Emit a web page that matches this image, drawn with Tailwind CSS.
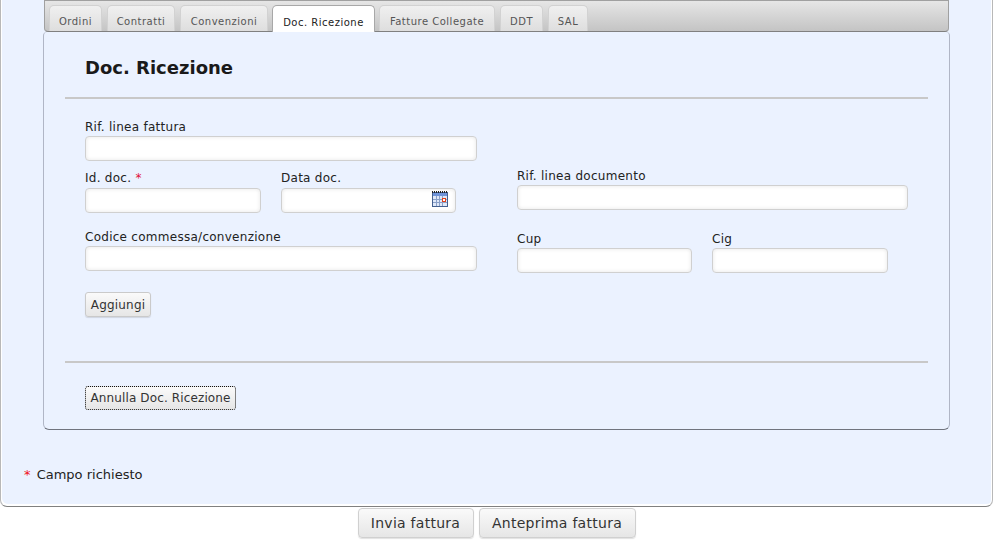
<!DOCTYPE html>
<html lang="it">
<head>
  <meta charset="UTF-8" />
  <title>Doc. Ricezione</title>
  <script src="https://cdn.jsdelivr.net/npm/@tailwindcss/browser@4"></script>
</head>
<body class="bg-white h-[542px] overflow-hidden font-['DejaVu_Sans',Verdana,sans-serif] text-[12px] tracking-[0.27px] text-[#222]">

  <!-- outer panel -->
  <div class="h-[507px] bg-[#ebf2ff] border-x border-x-[#b8b8b8] border-b border-b-[#808080] rounded-b-[7px] shadow-[inset_1px_-2px_0_#fff,inset_-1px_0_0_#fff] pl-[42px] pr-[42px]">

    <!-- tab bar -->
    <div class="h-[32px] mx-px px-[4px] pt-[4px] flex gap-[5px] bg-gradient-to-b from-[#e6e6e6] to-[#c4c4c4] border border-[#a0a0a0] border-b-[#808080] rounded-b-[4px] text-[10px] tracking-[0.5px] text-[#555]">
      <div class="h-[26px] w-[53px] pt-[6px] flex items-center justify-center rounded-t-[5px] border border-b-0 border-[#d2d2d2] bg-gradient-to-b from-[#f0f0f0] to-[#dedede]">Ordini</div>
      <div class="h-[26px] w-[68px] pt-[6px] flex items-center justify-center rounded-t-[5px] border border-b-0 border-[#d2d2d2] bg-gradient-to-b from-[#f0f0f0] to-[#dedede]">Contratti</div>
      <div class="h-[26px] w-[88px] pt-[6px] flex items-center justify-center rounded-t-[5px] border border-b-0 border-[#d2d2d2] bg-gradient-to-b from-[#f0f0f0] to-[#dedede]">Convenzioni</div>
      <div class="h-[27px] w-[103px] pt-[6px] flex items-center justify-center rounded-t-[5px] border border-b-0 border-[#a8a8a8] bg-white text-[#222] -mx-px z-10">Doc. Ricezione</div>
      <div class="h-[26px] w-[116px] pt-[6px] flex items-center justify-center rounded-t-[5px] border border-b-0 border-[#d2d2d2] bg-gradient-to-b from-[#f0f0f0] to-[#dedede]">Fatture Collegate</div>
      <div class="h-[26px] w-[43px] pt-[6px] flex items-center justify-center rounded-t-[5px] border border-b-0 border-[#d2d2d2] bg-gradient-to-b from-[#f0f0f0] to-[#dedede]">DDT</div>
      <div class="h-[26px] w-[40px] pt-[6px] flex items-center justify-center rounded-t-[5px] border border-b-0 border-[#d2d2d2] bg-gradient-to-b from-[#f0f0f0] to-[#dedede]">SAL</div>
    </div>

    <!-- tab panel -->
    <div class="h-[398px] border border-[#b0b6c6] border-b-[#70747e] rounded-[6px] rounded-t-[4px] border-t-0 px-[21px]">
      <h2 class="pt-[24px] pl-[20px] h-[65px] text-[18px] leading-[24px] font-bold tracking-normal text-[#1a1a1a]">Doc. Ricezione</h2>
      <div class="h-[2px] bg-[#c8c8c8]"></div>

      <div class="flex pl-[20px] pt-[20px] h-[264px] border-b-2 border-b-[#c8c8c8]">
        <!-- left column -->
        <div class="w-[392px]">
          <label class="block h-[17px] leading-[16px]">Rif. linea fattura</label>
          <input type="text" class="block w-[392px] h-[25px] rounded-[4px] border border-[#d0d0d0] bg-white shadow-[inset_0_0_4px_rgba(0,0,0,0.1)]" />
          <div class="flex gap-[20px] mt-[9px]">
            <div class="w-[176px]">
              <label class="block h-[18px] leading-[16px]">Id. doc. <span class="text-[#e0103a]">*</span></label>
              <input type="text" class="block w-[176px] h-[25px] rounded-[4px] border border-[#d0d0d0] bg-white shadow-[inset_0_0_4px_rgba(0,0,0,0.1)]" />
            </div>
            <div class="w-[175px]">
              <label class="block h-[18px] leading-[16px]">Data doc.</label>
              <div class="relative">
                <input type="text" class="block w-[175px] h-[25px] rounded-[4px] border border-[#d0d0d0] bg-white shadow-[inset_0_0_4px_rgba(0,0,0,0.1)]" />
                <!-- calendar icon -->
                <svg class="absolute top-[3px] left-[151px]" width="16" height="16" viewBox="0 0 16 16">
                  <rect x="0.5" y="1.5" width="15" height="14" fill="#dfe8f8" stroke="#44608f" />
                  <rect x="1" y="2" width="14" height="3" fill="#6f93d8" />
                  <path d="M0 1h1M2 1h1M4 1h1M6 1h1M8 1h1M10 1h1M12 1h1M14 1h1" stroke="#222" stroke-width="2" />
                  <path d="M1 8.5h14M1 11.5h14M4.5 5v10M7.5 5v10M10.5 5v10" stroke="#8aa0c8" />
                  <rect x="10.5" y="7.5" width="3" height="3" fill="#fff" stroke="#e0401a" />
                </svg>
              </div>
            </div>
          </div>
          <label class="block h-[17px] leading-[16px] mt-[16px]">Codice commessa/convenzione</label>
          <input type="text" class="block w-[392px] h-[25px] rounded-[4px] border border-[#d0d0d0] bg-white shadow-[inset_0_0_4px_rgba(0,0,0,0.1)]" />
          <button class="block mt-[21px] w-[66px] h-[25px] rounded-[3px] border border-[#cacaca] bg-gradient-to-b from-[#fafafa] to-[#e6e6e6] text-[#333] tracking-[0.2px] shadow-[0_1px_1px_rgba(0,0,0,0.12)]">Aggiungi</button>
        </div>

        <!-- right column -->
        <div class="w-[392px] ml-[40px] pt-[49px]">
          <label class="block h-[17px] leading-[16px]">Rif. linea documento</label>
          <input type="text" class="block w-[391px] h-[25px] rounded-[4px] border border-[#d0d0d0] bg-white shadow-[inset_0_0_4px_rgba(0,0,0,0.1)]" />
          <div class="flex gap-[20px] mt-[21px]">
            <div class="w-[175px]">
              <label class="block h-[17px] leading-[16px]">Cup</label>
              <input type="text" class="block w-[175px] h-[25px] rounded-[4px] border border-[#d0d0d0] bg-white shadow-[inset_0_0_4px_rgba(0,0,0,0.1)]" />
            </div>
            <div class="w-[176px]">
              <label class="block h-[17px] leading-[16px]">Cig</label>
              <input type="text" class="block w-[176px] h-[25px] rounded-[4px] border border-[#d0d0d0] bg-white shadow-[inset_0_0_4px_rgba(0,0,0,0.1)]" />
            </div>
          </div>
        </div>
      </div>

      <div class="pl-[20px] pt-[23px]">
        <button class="w-[151px] h-[24px] rounded-[3px] border border-dotted border-[#111] bg-gradient-to-b from-[#fafafa] to-[#e6e6e6] text-[#333] tracking-[0.13px]">Annulla Doc. Ricezione</button>
      </div>
    </div>

    <p class="mt-[37px] -ml-[19px] leading-[16px] text-[13px] tracking-normal"><span class="text-[#f01020] mr-[2px]">*</span> Campo richiesto</p>
  </div>

  <!-- footer buttons -->
  <div class="flex justify-center gap-[5px] pt-px text-[14px] tracking-[0.27px] text-[#333]">
    <button class="w-[116px] h-[30px] rounded-[4px] border border-[#d0d0d0] bg-gradient-to-b from-[#fafafa] to-[#e6e6e6] shadow-[0_1px_1px_rgba(0,0,0,0.12)]">Invia fattura</button>
    <button class="w-[157px] h-[30px] rounded-[4px] border border-[#d0d0d0] bg-gradient-to-b from-[#fafafa] to-[#e6e6e6] shadow-[0_1px_1px_rgba(0,0,0,0.12)]">Anteprima fattura</button>
  </div>
</body>
</html>
